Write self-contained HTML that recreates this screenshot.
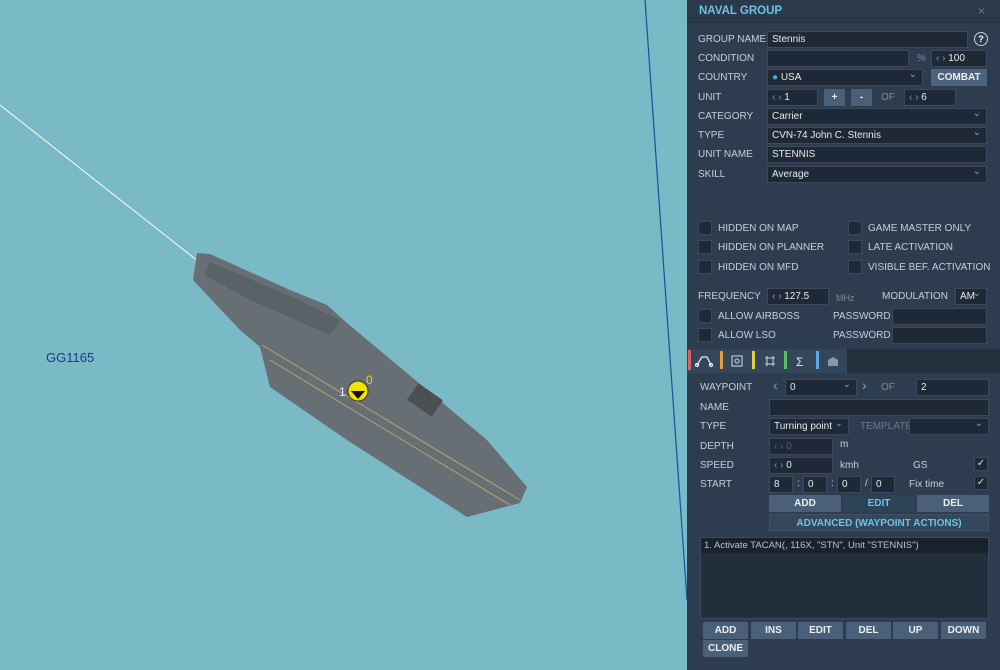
<!DOCTYPE html>
<html><head><style>
*{margin:0;padding:0;box-sizing:border-box}
body{width:1000px;height:670px;overflow:hidden;background:#7ab9c6;font-family:"Liberation Sans",sans-serif;position:relative}
.p{position:absolute;left:687px;top:0;width:313px;height:670px;background:#2d3d4f}
.a{position:absolute}
.l{position:absolute;font-size:10px;color:#c5ced8;line-height:14px;white-space:nowrap}
.i{position:absolute;background:#1e2935;border:1px solid #3a4a5c;height:17px;font-size:10px;color:#e6eaee;line-height:16px;padding-left:4px;white-space:nowrap;overflow:hidden}
.dd::after{content:"⌄";position:absolute;right:5px;top:-3px;color:#8a97a5;font-size:10px}
.b{position:absolute;background:#4a6079;color:#e8edf2;font-size:10px;font-weight:bold;text-align:center;height:17px;line-height:17px;border-radius:1px}
.cb{position:absolute;width:14px;height:14px;background:#1e2935;border:1px solid #3a4a5c}
.ar{color:#8a97a5}
</style></head><body>
<svg class="a" style="left:0;top:0" width="687" height="670">
<line x1="0" y1="105" x2="355" y2="385" stroke="#fff" stroke-width="1"/>
<line x1="645" y1="0" x2="687" y2="600" stroke="#1d4fa0" stroke-width="1.2"/>
<polygon points="197,253 210,254 290,290 327,305 347,323 487,440 527,487 520,503 467,517 347,440 270,387 260,347 240,330 193,280" fill="#676e74"/>
<polygon points="210,262 290,296 340,320 330,335 250,300 205,275" fill="#5a6167"/>
<line x1="262" y1="345" x2="520" y2="500" stroke="#b5a46a" stroke-width="1"/>
<line x1="270" y1="360" x2="510" y2="505" stroke="#b5a46a" stroke-width="1"/>
<rect x="410" y="390" width="30" height="20" fill="#4a4f54" transform="rotate(35 425 400)"/>
<circle cx="358" cy="391" r="10" fill="#f2e200" stroke="#333" stroke-width="1"/>
<path d="M358,391 L365,391 L358,399 L351,391 Z" fill="#111"/>
<text x="339" y="396" font-size="12" fill="#eee" font-family="Liberation Sans">1</text>
<text x="366" y="384" font-size="12" fill="#e8d800" font-family="Liberation Sans">0</text>
<text x="46" y="362" font-size="13" fill="#1d3a7a" font-family="Liberation Sans">GG1165</text>
</svg>
<div class="p">
<div class="a" style="left:0;top:0;width:313px;height:23px;background:#2a3a4b;border-bottom:1px solid #23303e"></div>
<div class="a" style="left:12px;top:5px;font-size:11.5px;font-weight:bold;color:#6ec2e2">NAVAL GROUP</div>
<div class="a" style="left:291px;top:4px;font-size:12px;color:#6f7c8a">×</div>

<div class="l" style="left:11px;top:33px">GROUP NAME</div><div class="i" style="left:80px;top:31px;width:201px">Stennis</div>
<div class="a" style="left:287px;top:32px;width:14px;height:14px;border-radius:50%;border:1px solid #c8d0d8;color:#fff;font-size:9px;font-weight:bold;text-align:center;line-height:12px">?</div>
<div class="l" style="left:11px;top:52px">CONDITION</div><div class="i" style="left:80px;top:50px;width:142px"></div>
<div class="l" style="left:230px;top:52px;color:#7d8a98">%</div><div class="i" style="left:244px;top:50px;width:56px"><span class="ar">‹ › </span>100</div>
<div class="l" style="left:11px;top:71px">COUNTRY</div><div class="i dd" style="left:80px;top:69px;width:156px"><span style="color:#3aaee0">●</span> USA</div>
<div class="b" style="left:244px;top:69px;width:56px;background:#4d637b">COMBAT</div>
<div class="l" style="left:11px;top:91px">UNIT</div><div class="i" style="left:80px;top:89px;width:51px"><span class="ar">‹ › </span>1</div>
<div class="b" style="left:137px;top:89px;width:21px">+</div><div class="b" style="left:164px;top:89px;width:21px">-</div>
<div class="l" style="left:194px;top:91px;color:#7d8a98">OF</div><div class="i" style="left:217px;top:89px;width:52px"><span class="ar">‹ › </span>6</div>
<div class="l" style="left:11px;top:110px">CATEGORY</div><div class="i dd" style="left:80px;top:108px;width:220px">Carrier</div>
<div class="l" style="left:11px;top:129px">TYPE</div><div class="i dd" style="left:80px;top:127px;width:220px">CVN-74 John C. Stennis</div>
<div class="l" style="left:11px;top:148px">UNIT NAME</div><div class="i" style="left:80px;top:146px;width:220px">STENNIS</div>
<div class="l" style="left:11px;top:168px">SKILL</div><div class="i dd" style="left:80px;top:166px;width:220px">Average</div>

<div class="cb" style="left:11px;top:221px"></div><div class="l" style="left:31px;top:222px">HIDDEN ON MAP</div>
<div class="cb" style="left:11px;top:240px"></div><div class="l" style="left:31px;top:241px">HIDDEN ON PLANNER</div>
<div class="cb" style="left:11px;top:260px"></div><div class="l" style="left:31px;top:261px">HIDDEN ON MFD</div>
<div class="cb" style="left:161px;top:221px"></div><div class="l" style="left:181px;top:222px">GAME MASTER ONLY</div>
<div class="cb" style="left:161px;top:240px"></div><div class="l" style="left:181px;top:241px">LATE ACTIVATION</div>
<div class="cb" style="left:161px;top:260px"></div><div class="l" style="left:181px;top:261px">VISIBLE BEF. ACTIVATION</div>

<div class="l" style="left:11px;top:290px">FREQUENCY</div><div class="i" style="left:80px;top:288px;width:62px"><span class="ar">‹ › </span>127.5</div>
<div class="l" style="left:149px;top:291px;color:#7d8a98;font-size:9px">MHz</div>
<div class="l" style="left:195px;top:290px">MODULATION</div><div class="i dd" style="left:268px;top:288px;width:32px">AM</div>
<div class="cb" style="left:11px;top:309px"></div><div class="l" style="left:31px;top:310px">ALLOW AIRBOSS</div>
<div class="l" style="left:146px;top:310px">PASSWORD</div><div class="i" style="left:205px;top:308px;width:95px"></div>
<div class="cb" style="left:11px;top:328px"></div><div class="l" style="left:31px;top:329px">ALLOW LSO</div>
<div class="l" style="left:146px;top:329px">PASSWORD</div><div class="i" style="left:205px;top:327px;width:95px"></div>

<div class="a" style="left:0;top:349px;width:313px;height:24px;background:#232f3c"></div>
<div class="a" style="left:0;top:349px;width:160px;height:24px;background:#34465a"></div>
<div class="a" style="left:1px;top:350px;width:3px;height:20px;background:#e06060"></div>
<div class="a" style="left:33px;top:351px;width:3px;height:18px;background:#e0a040"></div>
<div class="a" style="left:65px;top:351px;width:3px;height:18px;background:#e0d040"></div>
<div class="a" style="left:97px;top:351px;width:3px;height:18px;background:#50c060"></div>
<div class="a" style="left:129px;top:351px;width:3px;height:18px;background:#60a8e0"></div>
<svg class="a" style="left:8px;top:352px" width="150" height="18" fill="none" stroke="#e6eaee" stroke-width="1.3">
<path d="M2,13 L7,5 L12,5 L16,13"/><circle cx="2" cy="13" r="1.5"/><circle cx="16" cy="13" r="1.5"/>
<rect x="37" y="4" width="10" height="10" stroke="#b0bac4"/><circle cx="42" cy="9" r="2" stroke="#b0bac4"/>
<path d="M70,6 h10 M70,12 h10 M72,4 v10 M78,4 v10" stroke="#b0bac4"/>
<text x="101" y="14" fill="#e0e6ec" stroke="none" font-size="12" font-family="Liberation Sans">Σ</text>
<path d="M133,14 v-6 l5,-3 l5,3 v6 z" fill="#8a97a5" stroke="none"/>
</svg>

<div class="l" style="left:13px;top:381px">WAYPOINT</div>
<div class="a" style="left:86px;top:377px;color:#5ab0e0;font-size:14px">‹</div>
<div class="i dd" style="left:98px;top:379px;width:72px">0</div>
<div class="a" style="left:175px;top:377px;color:#5ab0e0;font-size:14px">›</div>
<div class="l" style="left:194px;top:381px;color:#7d8a98">OF</div><div class="i" style="left:229px;top:379px;width:73px">2</div>
<div class="l" style="left:13px;top:401px">NAME</div><div class="i" style="left:82px;top:399px;width:220px"></div>
<div class="l" style="left:13px;top:420px">TYPE</div><div class="i dd" style="left:82px;top:418px;width:80px">Turning point</div>
<div class="l" style="left:173px;top:420px;color:#6a7888">TEMPLATE</div><div class="i dd" style="left:222px;top:418px;width:80px"></div>
<div class="l" style="left:13px;top:440px">DEPTH</div><div class="i" style="left:82px;top:438px;width:64px;color:#55606c"><span class="ar" style="color:#55606c">‹ › </span>0</div>
<div class="l" style="left:153px;top:438px">m</div>
<div class="l" style="left:13px;top:459px">SPEED</div><div class="i" style="left:82px;top:457px;width:64px"><span class="ar">‹ › </span>0</div>
<div class="l" style="left:153px;top:459px">kmh</div><div class="l" style="left:226px;top:459px">GS</div>
<div class="cb" style="left:287px;top:457px;color:#ddd;font-size:10px;line-height:12px;text-align:center">✓</div>
<div class="l" style="left:13px;top:478px">START</div>
<div class="i" style="left:82px;top:476px;width:24px">8</div><div class="l" style="left:110px;top:477px">:</div>
<div class="i" style="left:116px;top:476px;width:24px">0</div><div class="l" style="left:144px;top:477px">:</div>
<div class="i" style="left:150px;top:476px;width:24px">0</div><div class="l" style="left:178px;top:477px">/</div>
<div class="i" style="left:184px;top:476px;width:24px">0</div>
<div class="l" style="left:222px;top:478px">Fix time</div>
<div class="cb" style="left:287px;top:476px;color:#ddd;font-size:10px;line-height:12px;text-align:center">✓</div>
<div class="b" style="left:82px;top:495px;width:72px">ADD</div>
<div class="b" style="left:156px;top:495px;width:72px;background:#2e4257;color:#6ec2e2">EDIT</div>
<div class="b" style="left:230px;top:495px;width:72px">DEL</div>
<div class="b" style="left:82px;top:514px;width:220px;background:#34475c;color:#6ec2e2;border:1px solid #3f5368">ADVANCED (WAYPOINT ACTIONS)</div>

<div class="a" style="left:13px;top:537px;width:289px;height:82px;background:#222e3b;border:1px solid #3a4a5c"></div>
<div class="a" style="left:14px;top:538px;width:287px;height:15px;background:#19222c;font-size:9.5px;color:#b8c2cc;padding-left:3px;line-height:15px">1. Activate TACAN(, 116X, "STN", Unit "STENNIS")</div>
<div class="b" style="left:16px;top:622px;width:45px">ADD</div>
<div class="b" style="left:64px;top:622px;width:45px">INS</div>
<div class="b" style="left:111px;top:622px;width:45px">EDIT</div>
<div class="b" style="left:159px;top:622px;width:45px">DEL</div>
<div class="b" style="left:206px;top:622px;width:45px">UP</div>
<div class="b" style="left:254px;top:622px;width:45px">DOWN</div>
<div class="b" style="left:16px;top:640px;width:45px">CLONE</div>
</div>
</body></html>
